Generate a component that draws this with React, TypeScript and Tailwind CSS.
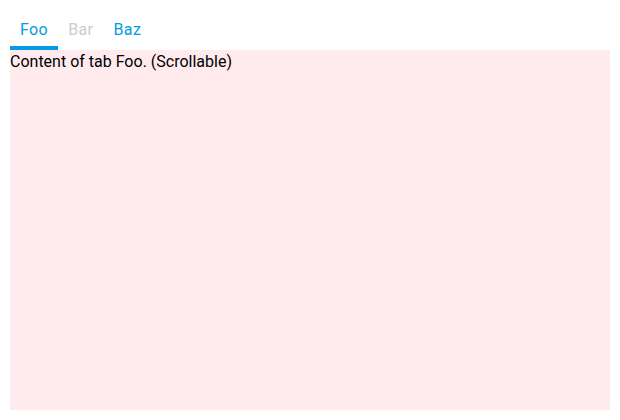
import { useState } from 'react';

const tabs = [
  { id: 'Foo', disabled: false },
  { id: 'Bar', disabled: true },
  { id: 'Baz', disabled: false },
];

export default function App() {
  const [active, setActive] = useState('Foo');

  return (
    <div className="p-[10px] h-[420px] flex flex-col font-['Roboto',sans-serif] text-base">
      <div className="flex h-10">
        {tabs.map(tab => (
          <button
            key={tab.id}
            disabled={tab.disabled}
            onClick={() => setActive(tab.id)}
            className={`relative px-[10px] tracking-[0.4px] ${
              tab.disabled ? 'text-[#cccccc]' : 'text-[#039be5]'
            }`}
          >
            {tab.id}
            {active === tab.id && (
              <span className="absolute left-0 right-0 bottom-0 h-1 bg-[#039be5]" />
            )}
          </button>
        ))}
      </div>
      <div className="flex-1 overflow-auto bg-[#ffebee] text-black leading-6">
        Content of tab {active}. (Scrollable)
      </div>
    </div>
  );
}
